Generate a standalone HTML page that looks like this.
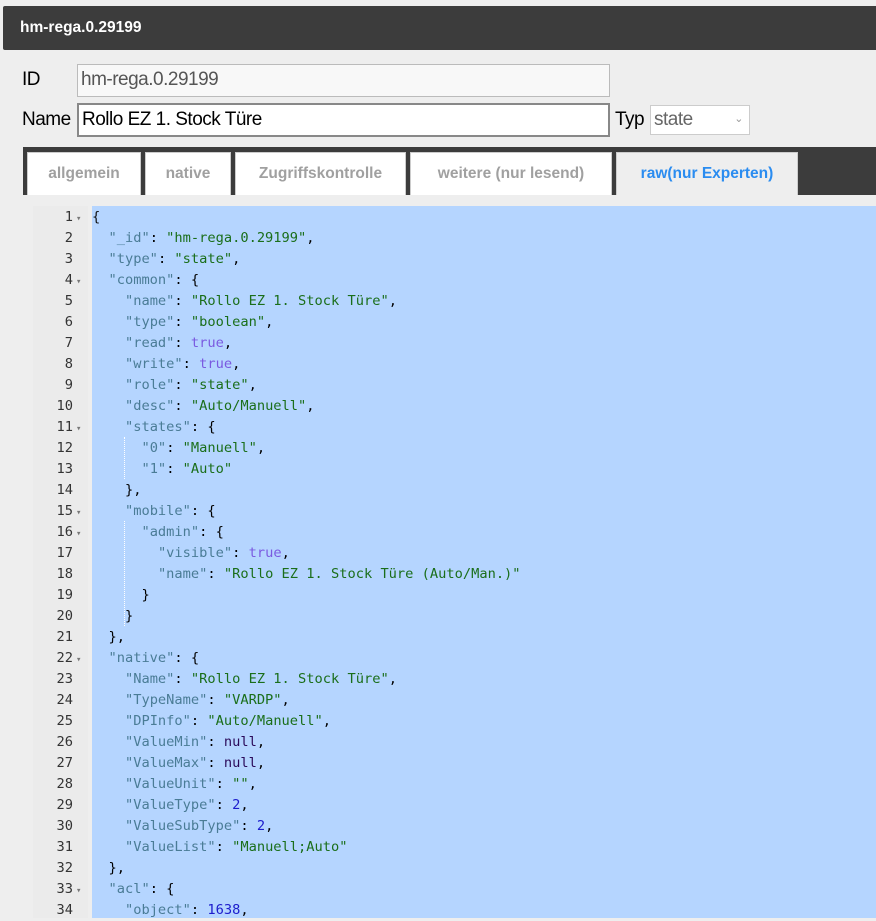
<!DOCTYPE html>
<html><head><meta charset="utf-8"><style>
*{margin:0;padding:0;box-sizing:border-box}
body{width:876px;height:918px;background:#eeeeee;font-family:"Liberation Sans",Arial,sans-serif;position:relative;overflow:hidden}
.bar{position:absolute;left:3px;top:6px;width:880px;height:44px;background:#3c3c3c;border-radius:2px;color:#fff;font-weight:bold;font-size:15.5px;line-height:44px;padding-left:17px}
.lbl{position:absolute;font-size:19px;color:#000;letter-spacing:-0.5px}
.inp{position:absolute;background:#f8f8f8;border:1px solid #bbb;font-size:19px;line-height:30px;padding-left:3px;color:#555;letter-spacing:-0.5px}
.tabs{position:absolute;left:23px;top:147px;width:853px;height:48px;background:#3c3c3c}
.tab{position:absolute;top:5px;height:43px;background:#fff;border:1px solid #ccc;border-bottom:none;font-weight:bold;font-size:15.5px;color:#a0a0a0;text-align:center;line-height:42px}
.gut{position:absolute;left:33px;top:206px;width:55px;height:712px;background:#ebebeb}
.sel{position:absolute;left:92px;top:206px;width:784px;height:712px;background:#b5d5ff}
.code{position:absolute;left:0;top:207px;font-family:"DejaVu Sans Mono","Liberation Mono",monospace;font-size:13.7px;line-height:21px;white-space:pre}
.ln{position:absolute;left:33px;width:40px;text-align:right;color:#333;font-family:"DejaVu Sans Mono",monospace;font-size:13.7px}
.fd{position:absolute;left:76px;color:#777;font-size:9px}
.k{color:#4a7c96}.s{color:#1a6e1a}.b{color:#7a5ae0}.n{color:#1c1ccc}.nl{color:#2a0a5a}.p{color:#111}
.cl{position:absolute;left:92px}
.g{position:absolute;border-left:1px dotted #fff;width:0}
</style></head><body>
<div class="bar">hm-rega.0.29199</div>
<div class="lbl" style="left:22px;top:69px">ID</div>
<div class="inp" style="left:77px;top:64px;width:533px;height:33px">hm-rega.0.29199</div>
<div class="lbl" style="left:22px;top:109px">Name</div>
<div class="inp" style="left:77px;top:103px;width:533px;height:34px;background:#fff;border:2px solid #888;color:#000;line-height:29px">Rollo EZ 1. Stock Türe</div>
<div class="lbl" style="left:615px;top:109px">Typ</div>
<div class="inp" style="left:650px;top:105px;width:100px;height:30px;background:#fff;border:1px solid #ccc;line-height:28px;color:#666">state<span style="position:absolute;right:6px;top:-1px;font-size:11px;color:#999">&#8964;</span></div>
<div class="tabs">
<div class="tab" style="left:4px;width:114px">allgemein</div>
<div class="tab" style="left:122px;width:86px">native</div>
<div class="tab" style="left:212px;width:171px">Zugriffskontrolle</div>
<div class="tab" style="left:387px;width:202px">weitere (nur lesend)</div>
<div class="tab" style="left:593px;width:182px;background:#eeeeee;color:#2a8cf0">raw(nur Experten)</div>
</div>
<div class="gut"></div>
<div class="sel"></div>
<div class="g" style="left:124px;top:437px;height:42px"></div>
<div class="g" style="left:124px;top:521px;height:105px"></div>
<div class="code" id="c"></div>
<script>
var L=[
'<span class="p">{</span>',
'  <span class="k">"_id"</span>: <span class="s">"hm-rega.0.29199"</span>,',
'  <span class="k">"type"</span>: <span class="s">"state"</span>,',
'  <span class="k">"common"</span>: {',
'    <span class="k">"name"</span>: <span class="s">"Rollo EZ 1. Stock Türe"</span>,',
'    <span class="k">"type"</span>: <span class="s">"boolean"</span>,',
'    <span class="k">"read"</span>: <span class="b">true</span>,',
'    <span class="k">"write"</span>: <span class="b">true</span>,',
'    <span class="k">"role"</span>: <span class="s">"state"</span>,',
'    <span class="k">"desc"</span>: <span class="s">"Auto/Manuell"</span>,',
'    <span class="k">"states"</span>: {',
'      <span class="k">"0"</span>: <span class="s">"Manuell"</span>,',
'      <span class="k">"1"</span>: <span class="s">"Auto"</span>',
'    },',
'    <span class="k">"mobile"</span>: {',
'      <span class="k">"admin"</span>: {',
'        <span class="k">"visible"</span>: <span class="b">true</span>,',
'        <span class="k">"name"</span>: <span class="s">"Rollo EZ 1. Stock Türe (Auto/Man.)"</span>',
'      }',
'    }',
'  },',
'  <span class="k">"native"</span>: {',
'    <span class="k">"Name"</span>: <span class="s">"Rollo EZ 1. Stock Türe"</span>,',
'    <span class="k">"TypeName"</span>: <span class="s">"VARDP"</span>,',
'    <span class="k">"DPInfo"</span>: <span class="s">"Auto/Manuell"</span>,',
'    <span class="k">"ValueMin"</span>: <span class="nl">null</span>,',
'    <span class="k">"ValueMax"</span>: <span class="nl">null</span>,',
'    <span class="k">"ValueUnit"</span>: <span class="s">""</span>,',
'    <span class="k">"ValueType"</span>: <span class="n">2</span>,',
'    <span class="k">"ValueSubType"</span>: <span class="n">2</span>,',
'    <span class="k">"ValueList"</span>: <span class="s">"Manuell;Auto"</span>',
'  },',
'  <span class="k">"acl"</span>: {',
'    <span class="k">"object"</span>: <span class="n">1638</span>,'
];
var F=[1,4,11,15,16,22,33];
var h='';
for(var i=0;i<L.length;i++){var t=i*21;
h+='<div class="ln" style="top:'+t+'px">'+(i+1)+'</div>';
if(F.indexOf(i+1)>=0)h+='<div class="fd" style="top:'+(t+2)+'px">&#9662;</div>';
h+='<div class="cl" style="top:'+t+'px">'+L[i]+'</div>';}
document.getElementById('c').innerHTML=h;
</script>
</body></html>
